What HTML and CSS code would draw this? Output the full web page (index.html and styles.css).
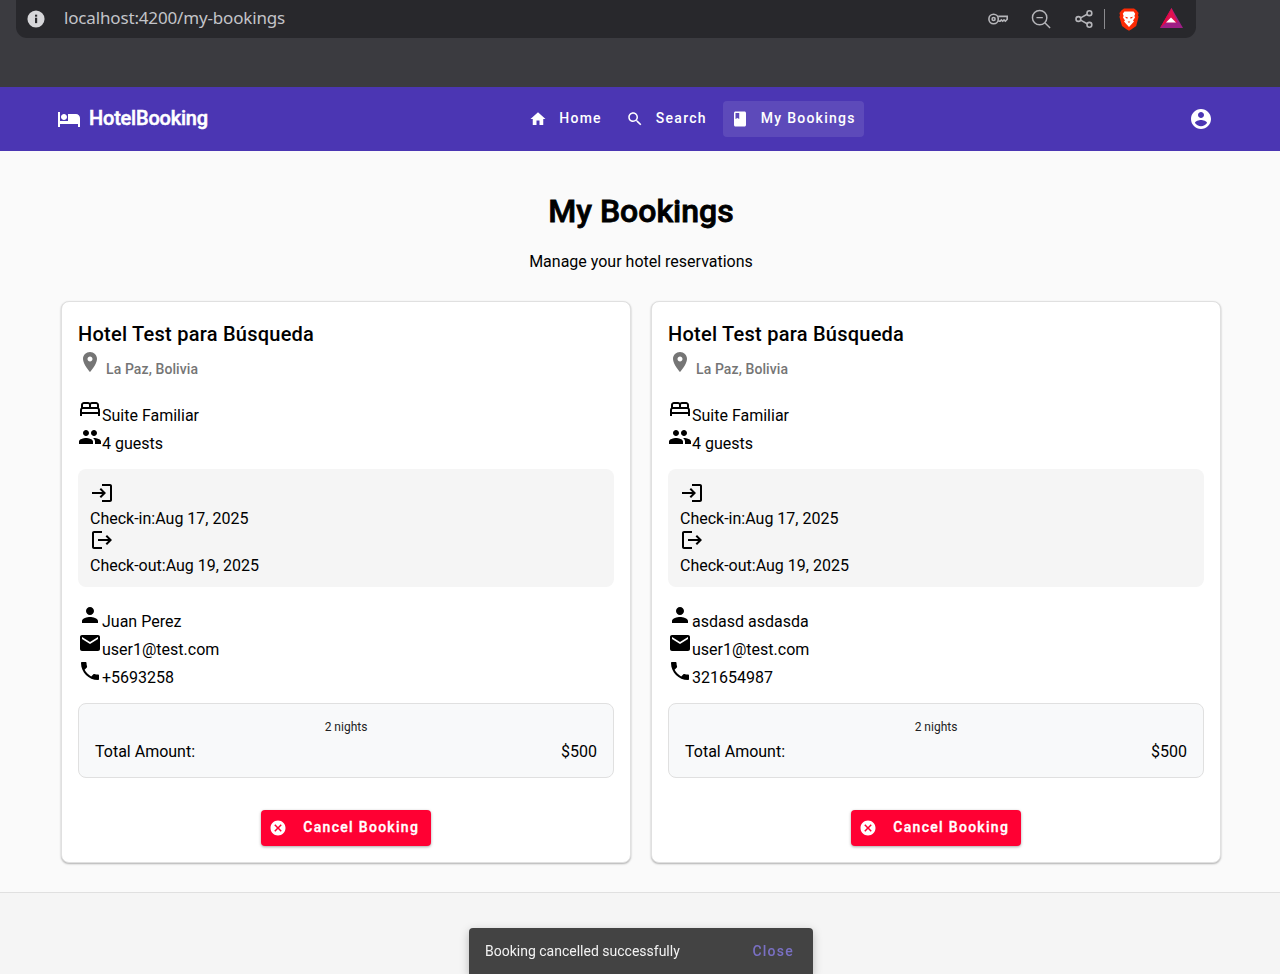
FILE: index.html
```html
<!DOCTYPE html>
<html lang="en">
<head>
<meta charset="utf-8">
<title>My Bookings</title>
<link rel="stylesheet" href="styles.css">
</head>
<body>
<svg class="defs" aria-hidden="true">
  <symbol id="i-hotel" viewBox="0 0 24 24"><path d="M7 13c1.66 0 3-1.34 3-3S8.66 7 7 7s-3 1.34-3 3 1.34 3 3 3zm12-6h-8v7H3V5H1v15h2v-3h18v3h2v-9c0-2.21-1.79-4-4-4z"/></symbol>
  <symbol id="i-home" viewBox="0 0 24 24"><path d="M10 20v-6h4v6h5v-8h3L12 3 2 12h3v8z"/></symbol>
  <symbol id="i-search" viewBox="0 0 24 24"><path d="M15.5 14h-.79l-.28-.27C15.41 12.59 16 11.11 16 9.5 16 5.91 13.09 3 9.5 3S3 5.91 3 9.5 5.91 16 9.5 16c1.61 0 3.09-.59 4.23-1.57l.27.28v.79l5 4.99L20.49 19l-4.99-5zm-6 0C7.01 14 5 11.99 5 9.5S7.01 5 9.5 5 14 7.01 14 9.5 11.99 14 9.5 14z"/></symbol>
  <symbol id="i-book" viewBox="0 0 24 24"><path d="M18 2H6c-1.1 0-2 .9-2 2v16c0 1.1.9 2 2 2h12c1.1 0 2-.9 2-2V4c0-1.1-.9-2-2-2zM6 4h5v8l-2.5-1.5L6 12V4z"/></symbol>
  <symbol id="i-account" viewBox="0 0 24 24"><path d="M12 2C6.48 2 2 6.48 2 12s4.48 10 10 10 10-4.48 10-10S17.52 2 12 2zm0 3c1.66 0 3 1.34 3 3s-1.34 3-3 3-3-1.34-3-3 1.34-3 3-3zm0 14.2c-2.5 0-4.71-1.28-6-3.22.03-1.99 4-3.08 6-3.08 1.99 0 5.97 1.09 6 3.08-1.29 1.94-3.5 3.22-6 3.22z"/></symbol>
  <symbol id="i-pin" viewBox="0 0 24 24"><path d="M12 2C8.13 2 5 5.13 5 9c0 5.25 7 13 7 13s7-7.75 7-13c0-3.87-3.13-7-7-7zm0 9.5c-1.38 0-2.5-1.12-2.5-2.5s1.12-2.5 2.5-2.5 2.5 1.12 2.5 2.5-1.12 2.5-2.5 2.5z"/></symbol>
  <symbol id="i-bed" viewBox="0 0 24 24"><path d="M21 10.78V8c0-1.65-1.35-3-3-3h-4c-.77 0-1.47.3-2 .78-.53-.48-1.23-.78-2-.78H6C4.35 5 3 6.35 3 8v2.78c-.61.55-1 1.34-1 2.22v6h2v-2h16v2h2v-6c0-.88-.39-1.67-1-2.22zM14 7h4c.55 0 1 .45 1 1v2h-6V8c0-.55.45-1 1-1zM5 8c0-.55.45-1 1-1h4c.55 0 1 .45 1 1v2H5V8zm-1 7v-2c0-.55.45-1 1-1h14c.55 0 1 .45 1 1v2H4z"/></symbol>
  <symbol id="i-people" viewBox="0 0 24 24"><path d="M16 11c1.66 0 2.99-1.34 2.99-3S17.66 5 16 5c-1.66 0-3 1.34-3 3s1.34 3 3 3zm-8 0c1.66 0 2.99-1.34 2.99-3S9.66 5 8 5C6.34 5 5 6.34 5 8s1.34 3 3 3zm0 2c-2.33 0-7 1.17-7 3.5V19h14v-2.5c0-2.33-4.67-3.5-7-3.5zm8 0c-.29 0-.62.02-.97.05 1.16.84 1.97 1.97 1.97 3.45V19h6v-2.5c0-2.33-4.67-3.5-7-3.5z"/></symbol>
  <symbol id="i-login" viewBox="0 0 24 24"><path d="M11 7L9.6 8.4l2.6 2.6H2v2h10.2l-2.6 2.6L11 17l5-5-5-5zm9 12h-8v2h8c1.1 0 2-.9 2-2V5c0-1.1-.9-2-2-2h-8v2h8v14z"/></symbol>
  <symbol id="i-logout" viewBox="0 0 24 24"><path d="M17 7l-1.41 1.41L18.17 11H8v2h10.17l-2.58 2.58L17 17l5-5zM4 5h8V3H4c-1.1 0-2 .9-2 2v14c0 1.1.9 2 2 2h8v-2H4V5z"/></symbol>
  <symbol id="i-person" viewBox="0 0 24 24"><path d="M12 12c2.21 0 4-1.79 4-4s-1.79-4-4-4-4 1.79-4 4 1.79 4 4 4zm0 2c-2.67 0-8 1.34-8 4v2h16v-2c0-2.66-5.33-4-8-4z"/></symbol>
  <symbol id="i-email" viewBox="0 0 24 24"><path d="M20 4H4c-1.1 0-1.99.9-1.99 2L2 18c0 1.1.9 2 2 2h16c1.1 0 2-.9 2-2V6c0-1.1-.9-2-2-2zm0 4l-8 5-8-5V6l8 5 8-5v2z"/></symbol>
  <symbol id="i-phone" viewBox="0 0 24 24"><path d="M6.62 10.79c1.44 2.83 3.76 5.14 6.59 6.59l2.2-2.2c.27-.27.67-.36 1.02-.24 1.12.37 2.33.57 3.57.57.55 0 1 .45 1 1V20c0 .55-.45 1-1 1-9.39 0-17-7.61-17-17 0-.55.45-1 1-1h3.5c.55 0 1 .45 1 1 0 1.25.2 2.45.57 3.57.11.35.03.74-.25 1.02l-2.2 2.2z"/></symbol>
  <symbol id="i-cancel" viewBox="0 0 24 24"><path d="M12 2C6.47 2 2 6.47 2 12s4.47 10 10 10 10-4.47 10-10S17.53 2 12 2zm5 13.59L15.59 17 12 13.41 8.41 17 7 15.59 10.59 12 7 8.41 8.41 7 12 10.59 15.59 7 17 8.41 13.41 12 17 15.59z"/></symbol>
</svg>

<div class="browser">
  <div class="urlbar">
    <svg class="url-info" viewBox="0 0 20 20"><circle cx="10" cy="10" r="9.5" fill="#d6d6d9"/><rect x="8.9" y="8.6" width="2.4" height="6" fill="#28282c"/><rect x="8.9" y="5.2" width="2.4" height="2.2" fill="#28282c"/></svg>
    <span class="url-text">localhost:4200/my-bookings</span>
    <div class="url-tools">
      <svg class="tool tool-key" viewBox="0 0 20 12"><circle cx="5.6" cy="6" r="4.7"/><circle cx="5.6" cy="6" r="1.5"/><path d="M10.2 3.4h9v2.8l-1.8 2-1.4-1.3-1.3 1.3-1.3-1.3-1.2 1.2h-2"/></svg>
      <svg class="tool tool-zoom" viewBox="0 0 22 22"><circle cx="9.5" cy="9.5" r="7.9"/><path d="M6 9.5h7M15.2 15.2l5.8 5.8"/></svg>
      <svg class="tool tool-share" viewBox="0 0 18 18"><circle cx="3.4" cy="9" r="2.4"/><circle cx="14.4" cy="3.2" r="2.4"/><circle cx="14.4" cy="14.8" r="2.4"/><path d="M5.6 7.9l6.6-3.6M5.6 10.1l6.6 3.6"/></svg>
      <span class="tool-sep"></span>
      <svg class="brave" viewBox="0 0 20 23"><path d="M5 .6h10l2.4 1.6L19.6 5l-.6 2.2.6 1.6-2.4 9.2-4.6 3.3-2.6 1.5-2.6-1.5L3 18 .4 8.8 1 7.2.4 5l2.2-2.8z" fill="#fb2a04"/><path d="M5.4 3.6h9.2l1.6 2.2-.8 2 .6 1.6-2 3.2 1 .8-2.7 3.2L10 19l-2.3-2.4L5 13.4l1-.8-2-3.2.6-1.6-.8-2z" fill="#fff"/><path d="M5.8 8.8l3 .4-.6 1.8zM14.2 8.8l-3 .4.6 1.8zM8.6 13.6h2.8L10 15z" fill="#fb2a04"/></svg>
      <svg class="bat" viewBox="0 0 23 20"><path d="M11.5 0L0 20h23z" fill="#9e1f85"/><path d="M11.5 0L0 20l6-5.4z" fill="#e8063f"/><path d="M11.5 0l6 14.6H6z" fill="#e0124f"/><path d="M11 9.4l5 5.2H6z" fill="#fff"/></svg>
    </div>
  </div>
</div>

<header class="navbar">
  <a class="brand"><svg class="ic"><use href="#i-hotel"/></svg><span class="lbl">HotelBooking</span></a>
  <nav class="nav">
    <a class="nav-btn"><svg class="ic-18"><use href="#i-home"/></svg><span class="lbl">Home</span></a>
    <a class="nav-btn"><svg class="ic-18"><use href="#i-search"/></svg><span class="lbl">Search</span></a>
    <a class="nav-btn active"><svg class="ic-18"><use href="#i-book"/></svg><span class="lbl">My Bookings</span></a>
  </nav>
  <div class="account"><svg class="ic"><use href="#i-account"/></svg></div>
</header>

<main class="page">
  <h1 class="page-title">My Bookings</h1>
  <p class="page-sub">Manage your hotel reservations</p>
  <div class="cards">
    <article class="card">
      <h2 class="hotel">Hotel Test para Búsqueda</h2>
      <div class="place"><svg class="ic grey"><use href="#i-pin"/></svg><span>La Paz, Bolivia</span></div>
      <div class="rows">
        <div><svg class="ic"><use href="#i-bed"/></svg>Suite Familiar</div>
        <div><svg class="ic"><use href="#i-people"/></svg>4 guests</div>
      </div>
      <div class="dates">
        <div class="date"><svg class="ic"><use href="#i-login"/></svg><div>Check-in:Aug 17, 2025</div></div>
        <div class="date"><svg class="ic"><use href="#i-logout"/></svg><div>Check-out:Aug 19, 2025</div></div>
      </div>
      <div class="rows">
        <div><svg class="ic"><use href="#i-person"/></svg>Juan Perez</div>
        <div><svg class="ic"><use href="#i-email"/></svg>user1@test.com</div>
        <div><svg class="ic"><use href="#i-phone"/></svg>+5693258</div>
      </div>
      <div class="price">
        <div class="nights">2 nights</div>
        <div class="total"><span>Total Amount:</span><span>$500</span></div>
      </div>
      <div class="actions"><button class="cancel"><svg class="ic-18"><use href="#i-cancel"/></svg><span class="lbl">Cancel Booking</span></button></div>
    </article>
    <article class="card">
      <h2 class="hotel">Hotel Test para Búsqueda</h2>
      <div class="place"><svg class="ic grey"><use href="#i-pin"/></svg><span>La Paz, Bolivia</span></div>
      <div class="rows">
        <div><svg class="ic"><use href="#i-bed"/></svg>Suite Familiar</div>
        <div><svg class="ic"><use href="#i-people"/></svg>4 guests</div>
      </div>
      <div class="dates">
        <div class="date"><svg class="ic"><use href="#i-login"/></svg><div>Check-in:Aug 17, 2025</div></div>
        <div class="date"><svg class="ic"><use href="#i-logout"/></svg><div>Check-out:Aug 19, 2025</div></div>
      </div>
      <div class="rows">
        <div><svg class="ic"><use href="#i-person"/></svg>asdasd asdasda</div>
        <div><svg class="ic"><use href="#i-email"/></svg>user1@test.com</div>
        <div><svg class="ic"><use href="#i-phone"/></svg>321654987</div>
      </div>
      <div class="price">
        <div class="nights">2 nights</div>
        <div class="total"><span>Total Amount:</span><span>$500</span></div>
      </div>
      <div class="actions"><button class="cancel"><svg class="ic-18"><use href="#i-cancel"/></svg><span class="lbl">Cancel Booking</span></button></div>
    </article>
  </div>
</main>
<footer class="footer"></footer>

<div class="snackbar"><span>Booking cancelled successfully</span><a class="snack-close">Close</a></div>
</body>
</html>
```
FILE: styles.css
```css
* { box-sizing: border-box; }
html, body { height: 100%; }
body {
  margin: 0;
  height: 974px;
  overflow: hidden;
  display: flex;
  flex-direction: column;
  background: #fafafa;
  color: #000;
  font-family: Roboto, "Liberation Sans", sans-serif;
  font-size: 16px;
}
.defs { position: absolute; width: 0; height: 0; }
.ic { width: 24px; height: 24px; fill: currentColor; }
.ic-18 { width: 18px; height: 18px; fill: currentColor; flex: none; }
.grey { color: #757575; }
.lbl { padding-bottom: 2px; }

.browser { height: 87px; flex: none; background: #3b3b40; padding: 0 84px 0 16px; }
.urlbar {
  height: 38px;
  background: #28282c;
  border-radius: 0 0 11px 11px;
  display: flex;
  align-items: center;
  padding: 0 13px 0 11px;
}
.url-info { width: 18px; height: 18px; margin-right: 19px; }
.url-text { font-family: "Noto Sans", sans-serif; font-size: 17px; letter-spacing: -.16px; color: #c3c4c9; padding-bottom: 4px; }
.url-tools { margin-left: auto; display: flex; align-items: center; }
.tool { fill: none; stroke: #b5b5b9; stroke-width: 1.6; }
.tool-key { width: 20px; height: 12px; margin-right: 23px; }
.tool-zoom { width: 20px; height: 20px; margin-right: 24px; }
.tool-share { width: 18px; height: 18px; margin-right: 11px; }
.tool-sep { width: 1px; height: 20px; background: #8b8b8f; margin-right: 14px; }
.brave { width: 20px; height: 23px; margin-right: 21px; }
.bat { width: 23px; height: 20px; margin-bottom: 2px; }

.navbar {
  height: 64px;
  flex: none;
  background: #4b36b3;
  color: #fff;
  display: flex;
  align-items: center;
  justify-content: space-between;
  padding: 0 55px 0 57px;
}
.brand { display: flex; align-items: center; gap: 8px; font-size: 20px; font-weight: 500; -webkit-text-stroke: .5px #fff; letter-spacing: -.2px; }
.nav { display: flex; gap: 8px; }
.nav-btn {
  height: 36px;
  padding: 0 8px;
  border-radius: 4px;
  display: flex;
  align-items: center;
  gap: 12px;
  font-size: 14px;
  font-weight: 500;
  letter-spacing: 1.25px;
}
.active { background: rgba(255, 255, 255, .1); }
.account { width: 48px; height: 48px; display: flex; align-items: center; justify-content: center; }

.page { padding: 40px 59px 29px 61px; flex: none; }
.page-title { margin: 0 0 21px; font-size: 32px; line-height: 40px; font-weight: 500; -webkit-text-stroke: .8px #000; text-align: center; }
.page-sub { margin: 0 0 29px; line-height: 20px; text-align: center; }
.cards { display: grid; grid-template-columns: 1fr 1fr; gap: 20px; }

.card {
  background: #fff;
  border: 1px solid #e0e0e0;
  border-radius: 8px;
  padding: 16px;
  box-shadow: 0 1px 2px rgba(0, 0, 0, .3);
}
.hotel { margin: 0; font-size: 20px; line-height: 32px; font-weight: 500; letter-spacing: .25px; }
.place { font-size: 14px; font-weight: 500; letter-spacing: .1px; color: #757575; margin-bottom: 20px; }
.place span { margin-left: 4px; }
.rows { margin-bottom: 16px; }
.dates { background: #f5f5f5; border-radius: 8px; padding: 12px; margin-bottom: 16px; }
.price {
  background: #f8f9fa;
  border: 1px solid #e0e0e0;
  border-radius: 8px;
  padding: 16px;
  margin-bottom: 32px;
}
.nights { font-size: 12px; line-height: 14px; text-align: center; margin-bottom: 8px; color: #222; }
.total { display: flex; justify-content: space-between; line-height: 19px; }
.actions { display: flex; justify-content: center; }
.cancel {
  height: 36px;
  border: 0;
  border-radius: 4px;
  background: #ff0033;
  color: #fff;
  display: flex;
  align-items: center;
  gap: 16px;
  padding: 0 12px 0 8.5px;
  font-family: inherit;
  font-size: 14px;
  font-weight: 500;
  -webkit-text-stroke: .35px #fff;
  letter-spacing: 1.3px;
  box-shadow: 0 1px 3px rgba(0, 0, 0, .35);
}

.footer { flex: 1; background: #f5f5f5; border-top: 1px solid #e0e0e0; }

.snackbar {
  position: fixed;
  left: 469px;
  bottom: 0;
  width: 344px;
  height: 46px;
  background: #434343;
  border-radius: 4px 4px 0 0;
  color: #f2f2f2;
  font-size: 14px;
  display: flex;
  align-items: center;
  justify-content: space-between;
  padding: 0 19px 0 16px;
  box-shadow: 0 3px 10px rgba(0, 0, 0, .25);
}
.snack-close { color: #7a70c4; font-weight: 500; letter-spacing: 1.25px; }
```
